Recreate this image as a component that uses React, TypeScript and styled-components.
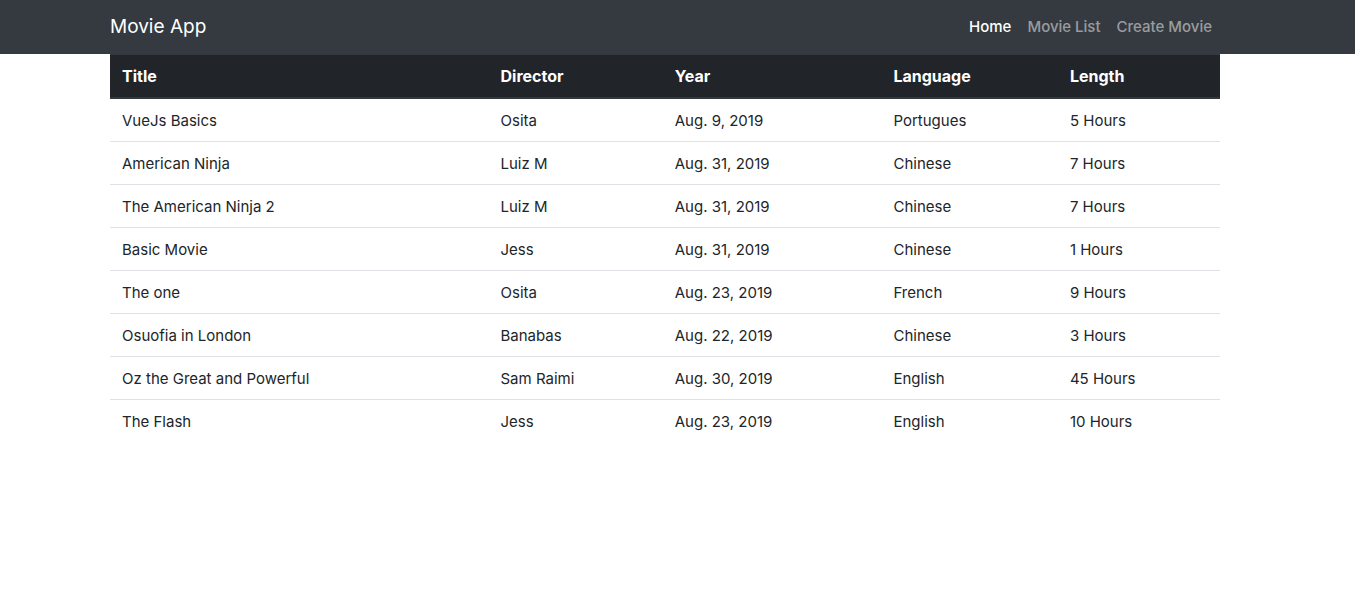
import React from "react";
import styled, { createGlobalStyle } from "styled-components";

const GlobalStyle = createGlobalStyle`
  *, *::before, *::after { box-sizing: border-box; }
  body {
    margin: 0;
    background: #fff;
    color: #212529;
    font-family: Inter, "Liberation Sans", sans-serif;
    font-size: 15px;
    line-height: 24px;
  }
`;

const Navbar = styled.nav`
  padding: 7px 25px 7px 0;
  background: #343a40;
`;

const Main = styled.main`
  padding-right: 25px;
`;

const Container = styled.div`
  max-width: 1140px;
  margin: 0 auto;
  padding: 0 15px;
`;

const NavInner = styled(Container)`
  display: flex;
  align-items: center;
  justify-content: space-between;
`;

const Brand = styled.a`
  color: #fff;
  font-size: 19px;
  line-height: 30px;
  text-decoration: none;
`;

const NavList = styled.ul`
  display: flex;
  list-style: none;
  margin: 0;
  padding: 0;
`;

const NavLink = styled.a<{ $active?: boolean }>`
  display: block;
  padding: 8px;
  color: ${(p) => (p.$active ? "#fff" : "rgba(255, 255, 255, 0.5)")};
  font-weight: 500;
  text-decoration: none;
`;

const Table = styled.table`
  width: 100%;
  border-collapse: separate;
  border-spacing: 0;
  table-layout: fixed;
`;

const Col = styled.col<{ $width: string }>`
  width: ${(p) => p.$width};
`;

const HeadCell = styled.th`
  padding: 9px 12px;
  background: #212529;
  color: #fff;
  border-top: 1px solid #32383e;
  border-bottom: 2px solid #32383e;
  font-size: 16px;
  font-weight: 700;
  text-align: left;
`;

const Cell = styled.td`
  padding: 10px 12px 8px;
  border-bottom: 1px solid #dee2e6;

  tr:last-child > & {
    border-bottom: 0;
  }
`;

const links = ["Home", "Movie List", "Create Movie"];

const columns = [
  { name: "Title", width: "34.1%" },
  { name: "Director", width: "15.7%" },
  { name: "Year", width: "19.7%" },
  { name: "Language", width: "15.9%" },
  { name: "Length", width: "auto" },
];

const movies = [
  ["VueJs Basics", "Osita", "Aug. 9, 2019", "Portugues", "5 Hours"],
  ["American Ninja", "Luiz M", "Aug. 31, 2019", "Chinese", "7 Hours"],
  ["The American Ninja 2", "Luiz M", "Aug. 31, 2019", "Chinese", "7 Hours"],
  ["Basic Movie", "Jess", "Aug. 31, 2019", "Chinese", "1 Hours"],
  ["The one", "Osita", "Aug. 23, 2019", "French", "9 Hours"],
  ["Osuofia in London", "Banabas", "Aug. 22, 2019", "Chinese", "3 Hours"],
  ["Oz the Great and Powerful", "Sam Raimi", "Aug. 30, 2019", "English", "45 Hours"],
  ["The Flash", "Jess", "Aug. 23, 2019", "English", "10 Hours"],
];

export default function App() {
  return (
    <>
      <GlobalStyle />
      <Navbar>
        <NavInner>
          <Brand href="#">Movie App</Brand>
          <NavList>
            {links.map((label, i) => (
              <li key={label}>
                <NavLink href="#" $active={i === 0}>{label}</NavLink>
              </li>
            ))}
          </NavList>
        </NavInner>
      </Navbar>
      <Main>
        <Container>
          <Table>
            <colgroup>
              {columns.map((c) => <Col key={c.name} $width={c.width} />)}
            </colgroup>
            <thead>
              <tr>
                {columns.map((c) => <HeadCell key={c.name} scope="col">{c.name}</HeadCell>)}
              </tr>
            </thead>
            <tbody>
              {movies.map((row) => (
                <tr key={row[0]}>
                  {row.map((value, i) => <Cell key={i}>{value}</Cell>)}
                </tr>
              ))}
            </tbody>
          </Table>
        </Container>
      </Main>
    </>
  );
}
